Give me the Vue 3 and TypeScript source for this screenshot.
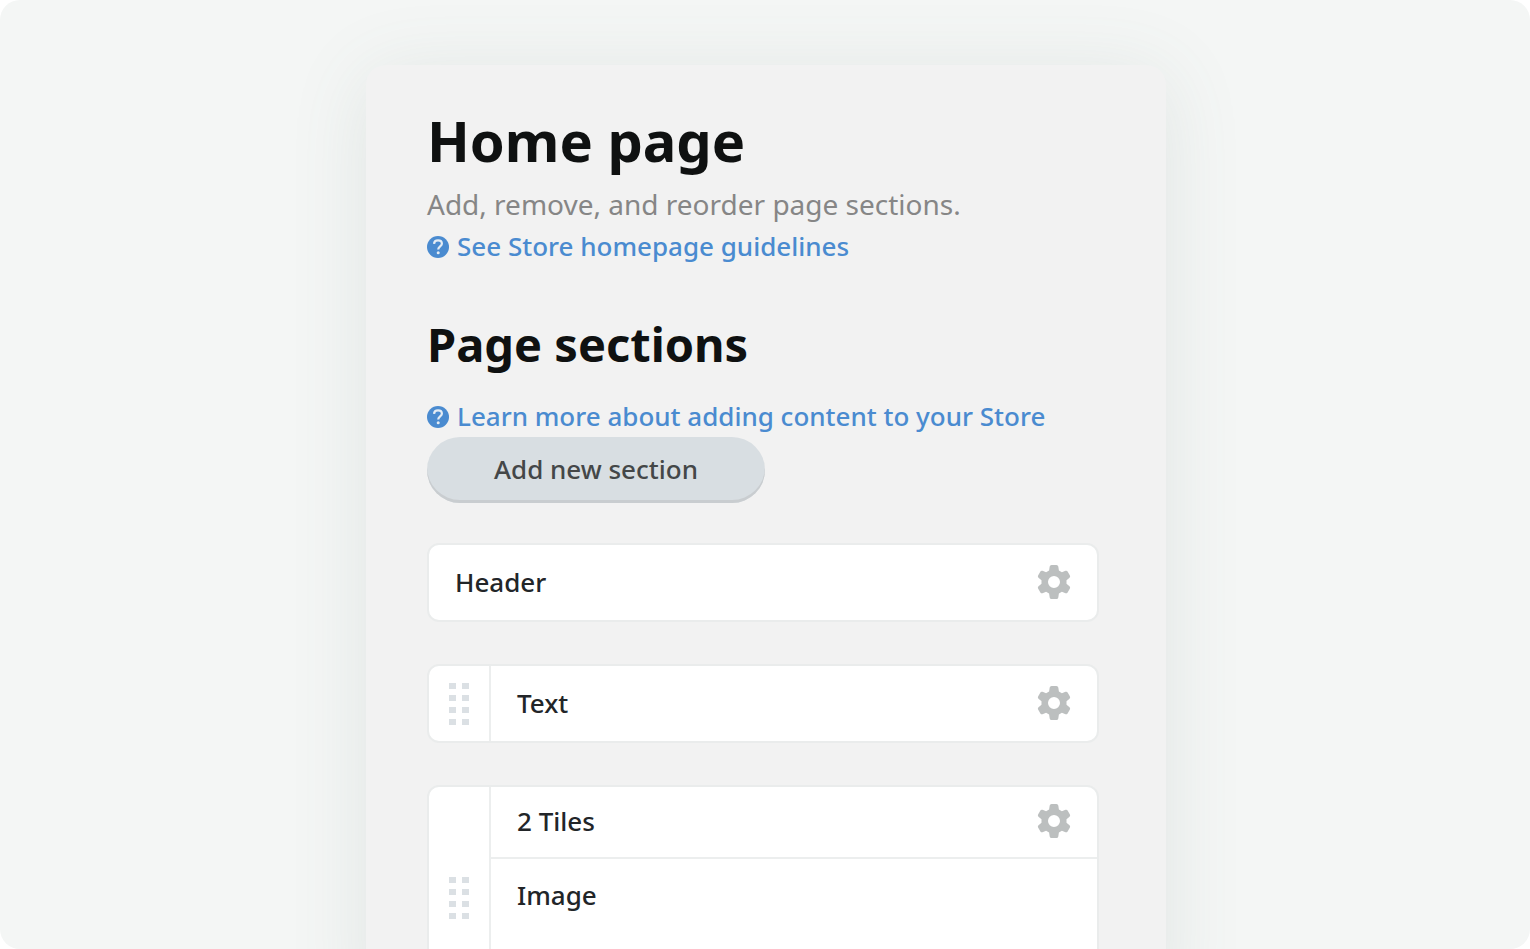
<script setup lang="ts">
interface Section {
  id: string
  title: string
  movable: boolean
  tiles: string[]
}

const sections: Section[] = [
  { id: 'header', title: 'Header', movable: false, tiles: [] },
  { id: 'text', title: 'Text', movable: true, tiles: [] },
  { id: 'tiles', title: '2 Tiles', movable: true, tiles: ['Image'] },
]
</script>

<template>
  <div class="stage">
    <main class="panel">
      <h1>Home page</h1>
      <p class="intro">Add, remove, and reorder page sections.</p>
      <a class="help" href="#guidelines">
        <svg class="help-icon" viewBox="0 0 22 22" aria-hidden="true">
          <circle cx="11" cy="11" r="11" fill="currentColor" />
          <path d="M7 7.8C7.2 5.6 8.8 4.4 11 4.4s3.9 1.2 3.9 3.3c0 2.7-3.7 2.8-3.7 5.8" fill="none" stroke="#e4ecf4" stroke-width="2.2" />
          <circle cx="11.2" cy="16.8" r="1.5" fill="#e4ecf4" />
        </svg>
        <span>See Store homepage guidelines</span>
      </a>

      <h2>Page sections</h2>
      <a class="help" href="#content">
        <svg class="help-icon" viewBox="0 0 22 22" aria-hidden="true">
          <circle cx="11" cy="11" r="11" fill="currentColor" />
          <path d="M7 7.8C7.2 5.6 8.8 4.4 11 4.4s3.9 1.2 3.9 3.3c0 2.7-3.7 2.8-3.7 5.8" fill="none" stroke="#e4ecf4" stroke-width="2.2" />
          <circle cx="11.2" cy="16.8" r="1.5" fill="#e4ecf4" />
        </svg>
        <span>Learn more about adding content to your Store</span>
      </a>
      <button class="add" type="button">Add new section</button>

      <ul class="sections">
        <li v-for="section in sections" :key="section.id" class="card" :class="{ group: section.tiles.length }">
          <button v-if="section.movable" class="handle" type="button" :aria-label="`Move ${section.title}`">
            <svg viewBox="0 0 22 44" aria-hidden="true">
              <template v-for="row in 4" :key="row">
                <rect x="1" :y="row * 12 - 11" width="7" height="6" />
                <rect x="14" :y="row * 12 - 11" width="7" height="6" />
              </template>
            </svg>
          </button>
          <div class="rows">
            <div class="row">
              <span>{{ section.title }}</span>
              <button class="settings" type="button" :aria-label="`${section.title} settings`">
                <svg viewBox="0 0 34 36" aria-hidden="true">
                  <path
                    fill-rule="evenodd"
                    d="M14.5 1h5q1.5 0 1.8 1.5l.6 4 3 1.7 3.6-1.4q1.4-.5 2.1.7l2.3 4.1q.7 1.3-.4 2.2l-3 2.5v3.4l3 2.5q1.1.9.4 2.2l-2.3 4.1q-.7 1.2-2.1.7l-3.6-1.4-3 1.7-.6 4q-.3 1.5-1.8 1.5h-5q-1.5 0-1.8-1.5l-.6-4-3-1.7-3.6 1.4q-1.4.5-2.1-.7l-2.3-4.1q-.7-1.3.4-2.2l3-2.5v-3.4l-3-2.5q-1.1-.9-.4-2.2l2.3-4.1q.7-1.2 2.1-.7l3.6 1.4 3-1.7.6-4Q13 1 14.5 1ZM17 12a6 6 0 1 0 0 12a6 6 0 1 0 0-12Z"
                  />
                </svg>
              </button>
            </div>
            <div v-for="tile in section.tiles" :key="tile" class="row tile">
              <span>{{ tile }}</span>
            </div>
          </div>
        </li>
      </ul>
    </main>
  </div>
</template>

<style>
body {
  margin: 0;
  background: #fff;
}
</style>

<style scoped>
.stage {
  box-sizing: border-box;
  height: 100vh;
  padding: 65px 24px 0 26px;
  overflow: hidden;
  border-radius: 20px;
  background: #f4f6f5;
  color: #222528;
  font-family: "Noto Sans", "Open Sans", sans-serif;
  font-size: 26px;
  line-height: 42px;
}

.panel {
  box-sizing: border-box;
  max-width: 800px;
  min-height: 100vh;
  margin: 0 auto;
  padding: 39px 67px 0 61px;
  border-radius: 20px;
  background: #f2f2f2;
  box-shadow: 0 10px 80px rgba(90, 115, 110, 0.12);
}

h1,
h2 {
  margin: 0;
  color: #0f1111;
  font-weight: 700;
}

h1 {
  font-size: 56px;
  line-height: 72px;
}

h2 {
  margin: 41px 0 15px;
  font-size: 47px;
  line-height: 72px;
}

.intro {
  margin: 7px 0 0;
  color: #868686;
  font-size: 28px;
}

.help {
  display: flex;
  align-items: center;
  gap: 8px;
  color: #4a8bd0;
  font-weight: 500;
  text-decoration: none;
}

.help-icon {
  flex: none;
  width: 22px;
  height: 22px;
  margin-top: 2px;
}

button {
  border: 0;
  padding: 0;
  background: none;
  font: inherit;
  color: inherit;
}

.add {
  width: 338px;
  height: 66px;
  padding-bottom: 3px;
  border-radius: 33px;
  background: #d8dee2;
  box-shadow: inset 0 -3px 0 #c9cdd0;
  color: #444748;
  font-weight: 500;
}

.sections {
  display: flex;
  flex-direction: column;
  gap: 42px;
  margin: 40px 0 0;
  padding: 0;
  list-style: none;
}

.card {
  display: flex;
  border: 2px solid #eaecec;
  border-radius: 12px;
  background: #fff;
  font-weight: 500;
}

.handle {
  flex: none;
  width: 62px;
  border-right: 2px solid #eceeee;
}

.handle svg {
  display: block;
  width: 22px;
  height: 44px;
  margin: 0 auto;
  fill: #dbe0e4;
}

.rows {
  flex: 1;
}

.row {
  display: flex;
  align-items: center;
  justify-content: space-between;
  min-height: 73px;
  padding: 0 26px 2px;
}

.group .row {
  min-height: 68px;
}

.group .tile {
  align-items: flex-start;
  min-height: 132px;
  padding-top: 15px;
  border-top: 2px solid #eceeee;
}

.settings svg {
  display: block;
  width: 34px;
  height: 36px;
  fill: #bcbfbf;
}
</style>
